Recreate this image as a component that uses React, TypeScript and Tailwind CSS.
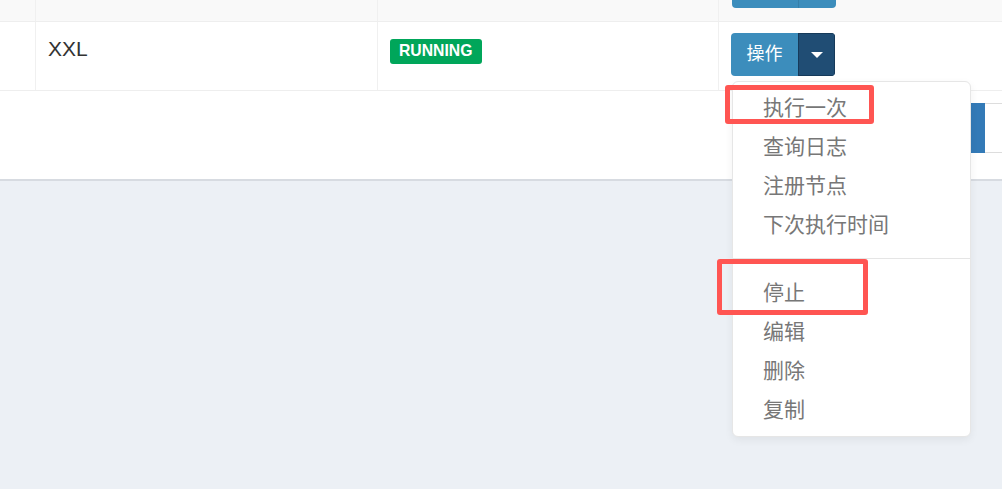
import React from "react";

const font = {
  fontFamily: '"Liberation Sans", "Noto Sans CJK SC", Arial, sans-serif',
};

const firstGroup = ["执行一次", "查询日志", "注册节点", "下次执行时间"];
const secondGroup = ["停止", "编辑", "删除", "复制"];

function SplitButton() {
  return (
    <div className="flex h-[43px] rounded-[4px] overflow-hidden w-fit">
      <div className="flex w-[67px] items-center justify-center bg-[#3c8dbc] text-[18px] text-white">
        操作
      </div>
      <div className="flex w-[37px] items-center justify-center bg-[#204d74] border border-[#163a5a]">
        <span className="block h-0 w-0 border-x-[6px] border-t-[6px] border-x-transparent border-t-white" />
      </div>
    </div>
  );
}

export default function App() {
  return (
    <div className="relative h-[489px] w-full overflow-hidden bg-[#ecf0f5]" style={font}>
      {/* Table panel */}
      <div className="overflow-hidden bg-white border-b-2 border-[#d7dbe1]">
        {/* header-ish row, cut off at the top */}
        <div className="flex h-[22px] overflow-hidden bg-[#f9f9f9] border-b border-[#eeeeee]">
          <div className="w-[35px] shrink-0" />
          <div className="w-[342px] shrink-0 border-l border-[#f0f0f0]" />
          <div className="w-[341px] shrink-0 border-l border-[#f0f0f0]" />
          <div className="flex-1 border-l border-[#f0f0f0] px-[13px]">
            <div className="-mt-[35px] flex h-[43px] w-[104px] rounded-[4px] overflow-hidden">
              <div className="w-[66px] bg-[#3c8dbc]" />
              <div className="flex-1 bg-[#3c8dbc] border-l border-[#367fa9]" />
            </div>
          </div>
        </div>

        {/* data row */}
        <div className="flex h-[69px] border-b border-[#eeeeee] text-[21px] text-[#333]">
          <div className="w-[35px] shrink-0" />
          <div className="w-[342px] shrink-0 border-l border-[#f0f0f0] px-[12px] pt-[12px] leading-[30px]">
            XXL
          </div>
          <div className="flex w-[341px] shrink-0 items-start border-l border-[#f0f0f0] px-[12px] pt-[17px]">
            <span className="rounded-[3px] bg-[#00a65a] px-[9px] pt-[4px] pb-[5px] text-[15.75px] font-bold leading-none text-white">
              RUNNING
            </span>
          </div>
          <div className="flex-1 border-l border-[#f0f0f0] px-[12px] pt-[11px]">
            <SplitButton />
          </div>
        </div>

        {/* footer area with pager / search */}
        <div className="flex h-[88px] justify-end pt-[12px]">
          <div className="h-[50px] w-[60px] bg-[#337ab7]" />
          <div className="h-[50px] w-[17px] border-y border-[#dddddd] bg-white" />
        </div>
      </div>

      {/* dropdown menu */}
      <div className="absolute left-[732px] top-[81px] w-[239px] rounded-[6px] border border-[#e6e6e6] bg-white pt-[6px] pb-[7px] shadow-[0_3px_8px_rgba(0,0,0,0.06)]">
        {firstGroup.map((item) => (
          <div key={item} className="h-[39px] px-[30px] text-[21px] leading-[39px] text-[#777]">
            {item}
          </div>
        ))}
        <div className="my-[14px] h-px bg-[#e5e5e5]" />
        {secondGroup.map((item) => (
          <div key={item} className="h-[39px] px-[30px] text-[21px] leading-[39px] text-[#777]">
            {item}
          </div>
        ))}
      </div>

      {/* annotation boxes */}
      <div className="absolute left-[725px] top-[85px] h-[39px] w-[149px] rounded-[3px] border-[5px] border-[#ff5552]" />
      <div className="absolute left-[717px] top-[259px] h-[56px] w-[151px] rounded-[3px] border-[5px] border-[#ff5552]" />
    </div>
  );
}
